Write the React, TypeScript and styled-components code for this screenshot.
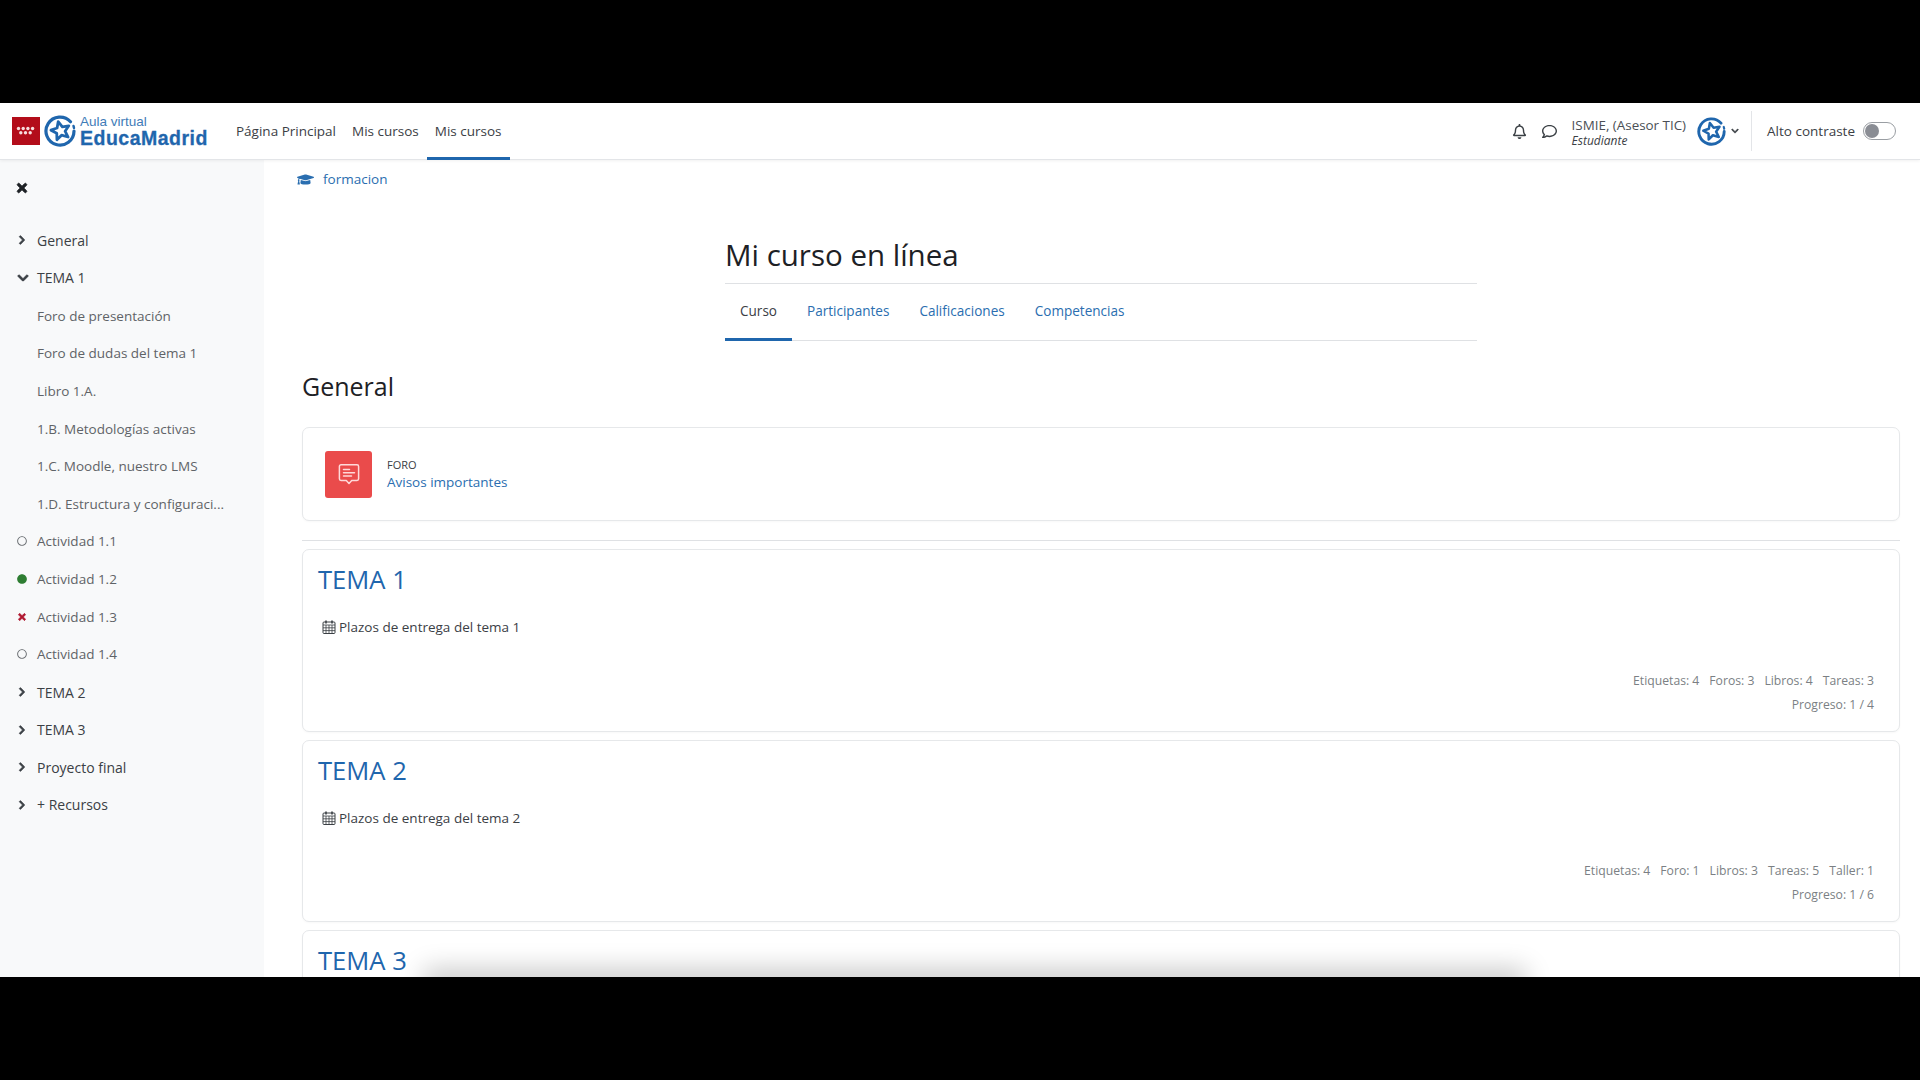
import React from 'react';
import styled, { createGlobalStyle } from 'styled-components';
import { FaTimes, FaChevronRight, FaChevronDown, FaGraduationCap, FaRegBell, FaRegComment, FaRegCircle, FaCircle } from 'react-icons/fa';

const Global = createGlobalStyle`
  html, body { margin: 0; padding: 0; background: #000; height: 100%; overflow: hidden; }
  * { box-sizing: border-box; }
  body { font-family: "Open Sans", "Noto Sans", sans-serif; color: #1d2125; }
`;
const Screen = styled.div`
  width: 1920px; height: 1080px; background: #000; padding: 103px 0;
`;
const Frame = styled.div`
  position: relative; width: 1920px; height: 874px; background: #fff; overflow: hidden;
  display: flex; flex-direction: column;
`;
const Header = styled.header`
  flex: none; height: 57px; display: flex; align-items: stretch; padding-left: 12px;
  background: #fff; border-bottom: 1px solid #e3e5e8; box-shadow: 0 1px 3px rgba(0,0,0,.06);
  position: relative; z-index: 2;
`;
const Logo = styled.div`
  display: flex; align-items: center; gap: 4px; width: 216px; flex: none;
`;
const LogoWords = styled.div`
  display: flex; flex-direction: column; font-family: "Liberation Sans", Arial, sans-serif; margin-top: 1px;
`;
const LogoSmall = styled.span`
  font-size: 13.5px; line-height: 13px; color: #3f7cb8;
`;
const LogoBig = styled.span`
  font-size: 19.5px; line-height: 20px; font-weight: 700; color: #1f66ad; letter-spacing: .5px;
  -webkit-text-stroke: .3px #1f66ad;
`;
const Nav = styled.nav`
  display: flex; align-items: stretch;
`;
const NavItem = styled.a<{ $active?: boolean }>`
  display: flex; align-items: center; padding: 1px 8px 0; font-size: 13.5px; color: #3b4045;
  border-bottom: 3px solid ${p => (p.$active ? '#1f66ad' : 'transparent')};
  margin-bottom: -1px;
`;
const Tools = styled.div`
  margin-left: auto; display: flex; align-items: center; color: #3b4045;
`;
const ToolIcon = styled.span`
  display: flex; font-size: 15px; margin-right: 15px; color: #3b4045;
`;
const User = styled.div`
  display: flex; flex-direction: column; margin-right: 11px; margin-top: 3px;
`;
const UserName = styled.span`
  font-size: 13.4px; line-height: 15px; color: #4a4f55;
`;
const UserRole = styled.span`
  font-size: 12px; line-height: 15px; font-style: italic; color: #3b4045;
`;
const UserCaret = styled.span`
  display: flex; margin-left: 5px; font-size: 8px; color: #3b4045;
  svg { stroke: currentColor; stroke-width: 30; }
`;
const ContrastBox = styled.div`
  display: flex; align-items: center; gap: 8px; height: 40px; margin-left: 12px;
  border-left: 1px solid #e3e5e8; padding: 0 24px 0 15px; font-size: 13.5px; color: #3b4045;
`;
const Toggle = styled.span`
  width: 33px; height: 18px; border: 1px solid #9a9ea3; border-radius: 9px; display: flex; align-items: center; padding-left: 1px;
`;
const Knob = styled.span`
  width: 14px; height: 14px; border-radius: 50%; background: #8a8d94;
`;
const Body = styled.div`
  flex: 1; display: flex; min-height: 0;
`;
const Side = styled.aside`
  width: 264px; flex: none; background: #f8f9fa; padding: 21px 0 0 16px;
`;
const CloseBtn = styled.div`
  display: flex; font-size: 14px; color: #1d2125; height: 40.5px; margin-left: -1px;
  svg { stroke: currentColor; stroke-width: 30; }
`;
const SideRow = styled.div<{ $top?: boolean }>`
  display: flex; align-items: center; height: 37.65px; white-space: nowrap;
  font-size: ${p => (p.$top ? '14px' : '13.5px')};
  color: ${p => (p.$top ? '#3b4045' : '#5f6367')};
`;
const SideMark = styled.span<{ $color?: string; $size?: number; $bold?: boolean }>`
  width: 21px; flex: none; display: flex; align-items: center; padding-left: .6px;
  color: ${p => p.$color || '#3b4045'}; font-size: ${p => p.$size || 10}px;
  svg { ${p => (p.$bold ? 'stroke: currentColor; stroke-width: 40;' : '')} }
`;
const Main = styled.main`
  flex: 1; min-width: 0; padding: 0 20px 0 38px; overflow: hidden;
`;
const Crumb = styled.div`
  height: 38px; display: flex; align-items: center; gap: 9px; font-size: 13.5px; color: #2a6eb0;
  margin-left: -5px;
  svg { font-size: 17px; }
`;
const CourseHead = styled.div`
  width: 752px; margin: 0 auto; padding-top: 36px;
`;
const CourseTitle = styled.h1`
  margin: 0; font-size: 29.5px; font-weight: 400; line-height: 41px; color: #1d2125; height: 50px;
  border-bottom: 1px solid #dfe1e4;
`;
const Tabs = styled.div`
  display: flex; height: 57px; border-bottom: 1px solid #dfe1e4;
`;
const Tab = styled.a<{ $active?: boolean }>`
  display: flex; align-items: center; padding: 0 15px; font-size: 13.55px; margin-bottom: -1px;
  color: ${p => (p.$active ? '#3b4045' : '#2a6eb0')};
  border-bottom: 3px solid ${p => (p.$active ? '#1f66ad' : 'transparent')};
`;
const SectionName = styled.h2`
  margin: 28px 0 24px; font-size: 25px; font-weight: 400; line-height: 34px; color: #1d2125;
`;
const Card = styled.div`
  width: 1598px; background: #fff; border: 1px solid #e6e8ea; border-radius: 7px;
  box-shadow: 0 1px 2px rgba(0,0,0,.03);
`;
const ForumCard = styled(Card)`
  height: 94px; display: flex; align-items: center; padding-left: 22px; gap: 15px;
`;
const ForumIcon = styled.div`
  width: 47px; height: 47px; border-radius: 3px; background: #ea4b4b; display: flex; align-items: center; justify-content: center;
`;
const ForumText = styled.div`
  display: flex; flex-direction: column; padding-top: 1px;
`;
const ForumKind = styled.span`
  font-size: 11px; line-height: 15px; color: #3b4045; margin-top: -1px;
`;
const ForumLink = styled.span`
  font-size: 13.5px; line-height: 20px; color: #2a6eb0;
`;
const Divider = styled.hr`
  width: 1598px; margin: 19px 0 8px; border: 0; border-top: 1px solid #dfe1e4;
`;
const TopicCard = styled(Card)`
  height: 182.5px; margin-bottom: 8px; padding: 12px 25px 0 15px; display: flex; flex-direction: column;
`;
const TopicTitle = styled.h3`
  margin: 0; font-size: 25.6px; line-height: 36px; font-weight: 400; color: #1f66ad;
`;
const TopicDeadline = styled.div`
  display: flex; align-items: center; gap: 3px; margin: 19px 0 0 4px; font-size: 13.5px; line-height: 20px; color: #3b4045;
`;
const Stats = styled.div`
  margin-top: auto; margin-bottom: 14px; display: flex; flex-direction: column; align-items: flex-end;
  font-size: 12.2px; line-height: 24px; color: #7b7f84;
`;
const StatRow = styled.div`
  display: flex; gap: 10px;
`;
const BottomFade = styled.div`
  position: absolute; left: 430px; width: 1090px; bottom: -14px; height: 14px;
  box-shadow: 0 -2px 26px 6px rgba(0,0,0,.22); pointer-events: none;
`;

const Emblem = ({ s }: { s: number }) => (
  <svg width={s} height={s} viewBox="0 0 32 32" fill="none">
    <path d="M26.500 6.800A14 14 0 1 0 30 16" stroke="#1f66ad" strokeWidth="3.200" strokeLinecap="round" />
    <path d="M29.500 11a14 14 0 0 1 .5 2" stroke="#1f66ad" strokeWidth="2.400" strokeLinecap="round" />
    <g transform="rotate(-14 16 16)">
      <path d="M16.500 6.500l2.800 6 6.500.6-4.900 4.300 1.500 6.400-5.900-3.400-5.600 3.400 1.400-6.400L7.400 13l6.500-.6z" stroke="#1f66ad" strokeWidth="2.800" strokeLinejoin="round" />
    </g>
  </svg>
);

const Flag = () => (
  <svg width="28" height="28" viewBox="0 0 28 28">
    <rect width="28" height="28" fill="#b30d1a" />
    {[6.500, 11.200, 15.900, 20.600].map(x => (
      <circle key={x} cx={x} cy="11.500" r="1.700" fill="#f7dede" />
    ))}
    {[8.800, 13.500, 18.200].map(x => (
      <circle key={x} cx={x} cy="15.800" r="1.700" fill="#f7dede" />
    ))}
  </svg>
);

const ForumGlyph = () => (
  <svg width="24" height="24" viewBox="0 0 24 24" fill="none" stroke="#ffd9d9" strokeWidth="1.500" strokeLinecap="round" strokeLinejoin="round">
    <path d="M4 2.800h16a1.600 1.600 0 0 1 1.600 1.600v12.400a1.600 1.600 0 0 1-1.600 1.600h-5.300L12 21.400l-2.700-3H4a1.600 1.600 0 0 1-1.600-1.600V4.400a1.600 1.600 0 0 1 1.600-1.600z" />
    <path d="M6.500 7.500h6M6.500 10.800h11M6.500 14.100h8" />
  </svg>
);

const CalendarGlyph = () => (
  <svg width="14" height="14" viewBox="0 0 14 14" fill="none" stroke="#3b4045" strokeWidth="1">
    <rect x="1" y="2" width="12" height="11.500" rx="1" />
    <path d="M1 5h12M1 7.800h12M1 10.600h12M4 5v8.500M7 5v8.500M10 5v8.500" strokeWidth=".8" />
    <path d="M4 .5v3M10 .5v3" strokeWidth="1.600" />
  </svg>
);

type Item = { label: string; kind: 'closed' | 'open' | 'none' | 'todo' | 'done' | 'fail'; top?: boolean };
const items: Item[] = [
  { label: 'General', kind: 'closed', top: true },
  { label: 'TEMA 1', kind: 'open', top: true },
  { label: 'Foro de presentación', kind: 'none' },
  { label: 'Foro de dudas del tema 1', kind: 'none' },
  { label: 'Libro 1.A.', kind: 'none' },
  { label: '1.B. Metodologías activas', kind: 'none' },
  { label: '1.C. Moodle, nuestro LMS', kind: 'none' },
  { label: '1.D. Estructura y configuraci...', kind: 'none' },
  { label: 'Actividad 1.1', kind: 'todo' },
  { label: 'Actividad 1.2', kind: 'done' },
  { label: 'Actividad 1.3', kind: 'fail' },
  { label: 'Actividad 1.4', kind: 'todo' },
  { label: 'TEMA 2', kind: 'closed', top: true },
  { label: 'TEMA 3', kind: 'closed', top: true },
  { label: 'Proyecto final', kind: 'closed', top: true },
  { label: '+ Recursos', kind: 'closed', top: true },
];

const mark = (k: Item['kind']) => {
  switch (k) {
    case 'closed': return <SideMark $bold><FaChevronRight /></SideMark>;
    case 'open': return <SideMark $size={12} $bold><FaChevronDown /></SideMark>;
    case 'todo': return <SideMark $color="#6d7175"><FaRegCircle /></SideMark>;
    case 'done': return <SideMark $color="#2e7d32"><FaCircle /></SideMark>;
    case 'fail': return <SideMark $color="#b0172f" $bold><FaTimes /></SideMark>;
    default: return <SideMark />;
  }
};

const topics = [
  { title: 'TEMA 1', due: 'Plazos de entrega del tema 1', stats: ['Etiquetas: 4', 'Foros: 3', 'Libros: 4', 'Tareas: 3'], progress: 'Progreso: 1 / 4' },
  { title: 'TEMA 2', due: 'Plazos de entrega del tema 2', stats: ['Etiquetas: 4', 'Foro: 1', 'Libros: 3', 'Tareas: 5', 'Taller: 1'], progress: 'Progreso: 1 / 6' },
];

export default function App() {
  return (
    <Screen>
      <Global />
      <Frame>
        <Header>
          <Logo>
            <Flag />
            <Emblem s={32} />
            <LogoWords>
              <LogoSmall>Aula virtual</LogoSmall>
              <LogoBig>EducaMadrid</LogoBig>
            </LogoWords>
          </Logo>
          <Nav>
            <NavItem>Página Principal</NavItem>
            <NavItem>Mis cursos</NavItem>
            <NavItem $active>Mis cursos</NavItem>
          </Nav>
          <Tools>
            <ToolIcon><FaRegBell /></ToolIcon>
            <ToolIcon><FaRegComment /></ToolIcon>
            <User>
              <UserName>ISMIE, (Asesor TIC)</UserName>
              <UserRole>Estudiante</UserRole>
            </User>
            <Emblem s={29} />
            <UserCaret><FaChevronDown /></UserCaret>
            <ContrastBox>
              Alto contraste
              <Toggle><Knob /></Toggle>
            </ContrastBox>
          </Tools>
        </Header>
        <Body>
          <Side>
            <CloseBtn><FaTimes /></CloseBtn>
            {items.map(i => (
              <SideRow key={i.label} $top={i.top}>
                {mark(i.kind)}
                {i.label}
              </SideRow>
            ))}
          </Side>
          <Main>
            <Crumb><FaGraduationCap />formacion</Crumb>
            <CourseHead>
              <CourseTitle>Mi curso en línea</CourseTitle>
              <Tabs>
                <Tab $active>Curso</Tab>
                <Tab>Participantes</Tab>
                <Tab>Calificaciones</Tab>
                <Tab>Competencias</Tab>
              </Tabs>
            </CourseHead>
            <SectionName>General</SectionName>
            <ForumCard>
              <ForumIcon><ForumGlyph /></ForumIcon>
              <ForumText>
                <ForumKind>FORO</ForumKind>
                <ForumLink>Avisos importantes</ForumLink>
              </ForumText>
            </ForumCard>
            <Divider />
            {topics.map(t => (
              <TopicCard key={t.title}>
                <TopicTitle>{t.title}</TopicTitle>
                <TopicDeadline><CalendarGlyph />{t.due}</TopicDeadline>
                <Stats>
                  <StatRow>{t.stats.map(s => <span key={s}>{s}</span>)}</StatRow>
                  <span>{t.progress}</span>
                </Stats>
              </TopicCard>
            ))}
            <TopicCard>
              <TopicTitle>TEMA 3</TopicTitle>
            </TopicCard>
          </Main>
        </Body>
        <BottomFade />
      </Frame>
    </Screen>
  );
}
